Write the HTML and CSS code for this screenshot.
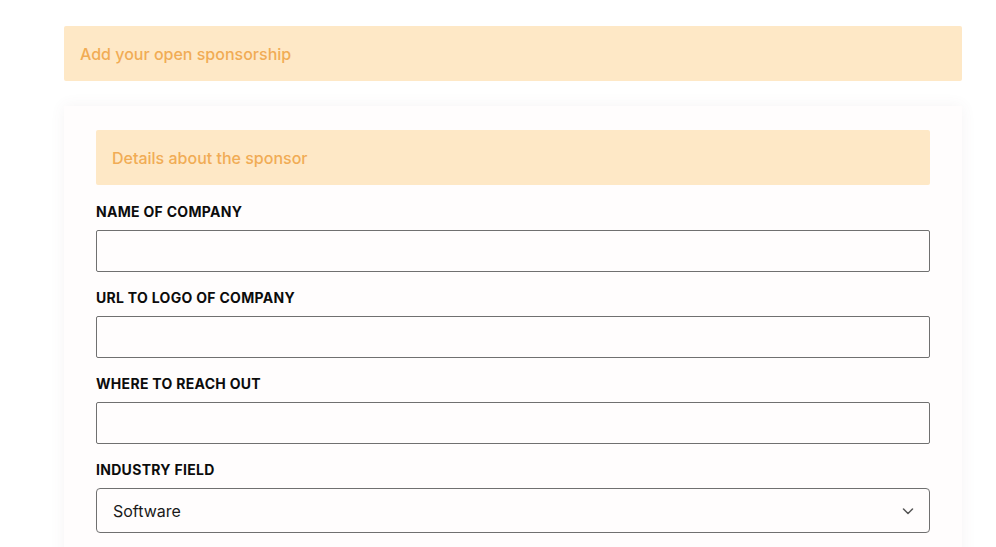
FILE: index.html
```html
<!DOCTYPE html>
<html lang="en">
<head>
<meta charset="utf-8">
<title>Add your open sponsorship</title>
<link rel="stylesheet" href="styles.css">
</head>
<body>
<main class="page">
  <div class="banner">Add your open sponsorship</div>
  <form class="card">
    <div class="banner">Details about the sponsor</div>
    <div class="field">
      <label class="label" for="name">NAME OF COMPANY</label>
      <input class="input" id="name" type="text">
    </div>
    <div class="field">
      <label class="label" for="logo">URL TO LOGO OF COMPANY</label>
      <input class="input" id="logo" type="text">
    </div>
    <div class="field">
      <label class="label" for="reach">WHERE TO REACH OUT</label>
      <input class="input" id="reach" type="text">
    </div>
    <div class="field">
      <label class="label" for="industry">INDUSTRY FIELD</label>
      <div class="select">
        <span>Software</span>
        <svg class="chev" width="14" height="14" viewBox="0 0 14 14"><path d="M2.5 5 L7 9.5 L11.5 5" fill="none" stroke="#555" stroke-width="1.5" stroke-linecap="round" stroke-linejoin="round"/></svg>
      </div>
    </div>
  </form>
</main>
</body>
</html>
```

FILE: styles.css
```css
html, body {
  margin: 0;
  padding: 0;
  background: #ffffff;
}
body {
  font-family: Inter, "Noto Sans", sans-serif;
  color: #111;
  overflow: hidden;
  height: 547px;
}
.page {
  width: 898px;
  margin-left: 64px;
  padding-top: 26px;
}
.banner {
  background: #fee8c6;
  color: #f1ac55;
  font-size: 16px;
  font-weight: 500;
  line-height: 23px;
  padding: 17px 16px 15px;
  border-radius: 2px;
}
.card {
  margin-top: 25px;
  background: #fffdfd;
  box-shadow: 0 0 14px rgba(120, 90, 100, 0.07);
  padding: 24px 32px;
  height: 600px;
  box-sizing: border-box;
}
.card .banner {
  margin-bottom: 17px;
}
.field {
  display: flex;
  flex-direction: column;
  margin-bottom: 16px;
}
.label {
  font-size: 14px;
  font-weight: 700;
  line-height: 20px;
  letter-spacing: 0.3px;
  margin-bottom: 8px;
  color: #0c0c0c;
}
.input {
  height: 42px;
  box-sizing: border-box;
  border: 1px solid #707070;
  border-radius: 2px;
  background: #fffdfd;
  font: inherit;
  margin: 0;
}
.select {
  height: 45px;
  box-sizing: border-box;
  border: 1px solid #707070;
  border-radius: 4px;
  display: flex;
  align-items: center;
  justify-content: space-between;
  padding: 0 14px 0 16px;
  font-size: 16px;
  color: #1a1a1a;
  background: #fffdfd;
}
.chev {
  display: block;
}
```
